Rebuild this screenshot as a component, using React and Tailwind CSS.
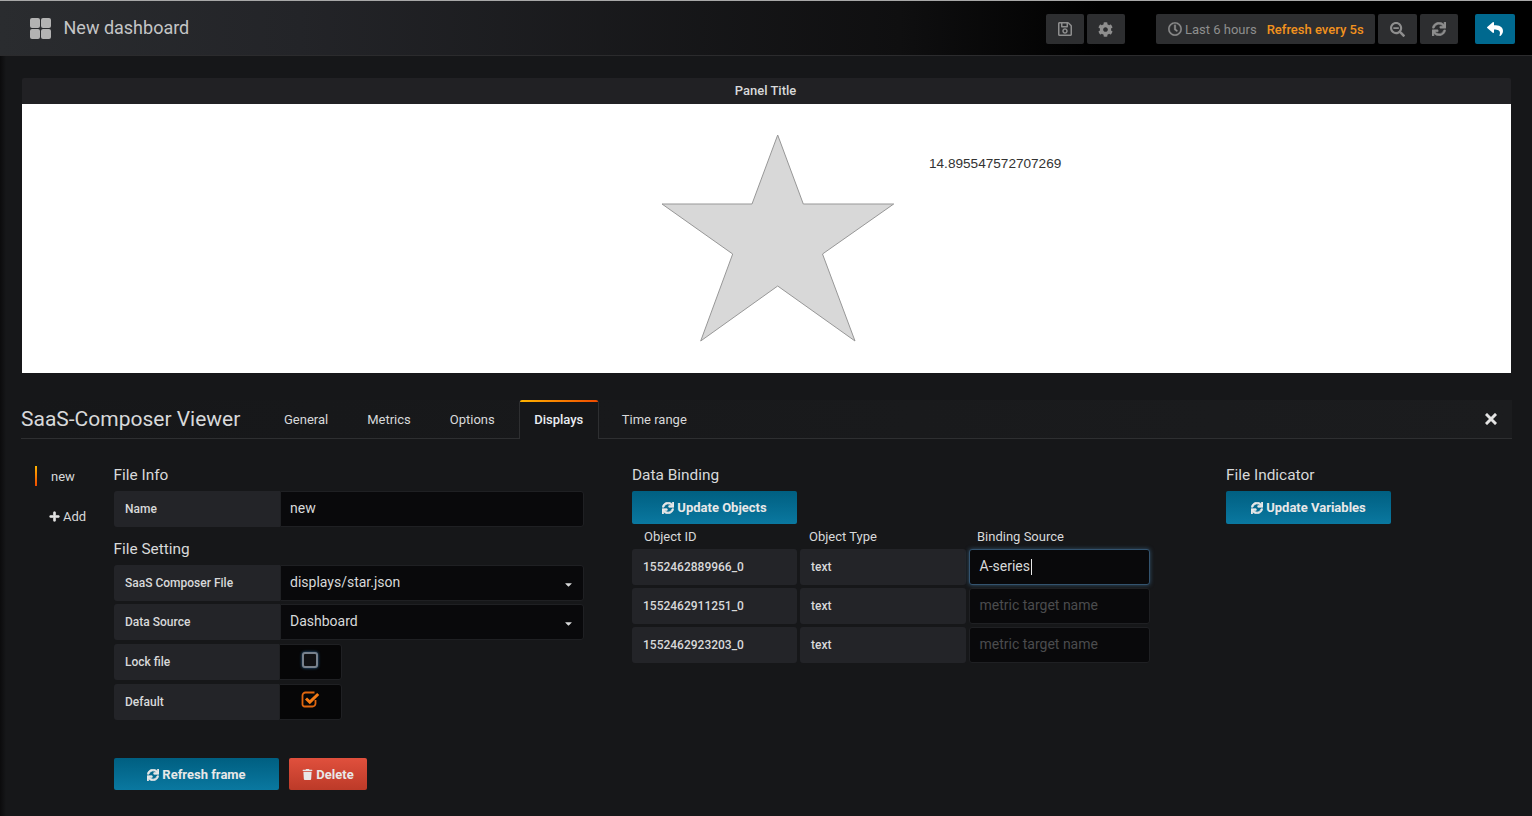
import { FaCaretDown, FaCog, FaPlus, FaRegClock, FaRegSave, FaReply, FaSearchMinus, FaSync, FaTrash } from "react-icons/fa";

const tabs = ["General", "Metrics", "Options", "Displays", "Time range"];

const bindings = [
  { id: "1552462889966_0", value: "A-series", focused: true },
  { id: "1552462911251_0" },
  { id: "1552462923203_0" },
];

function NavButton({ children, className = "" }) {
  return (
    <div className={`flex h-[30px] items-center justify-center rounded-[2px] bg-[#2d2e30] text-[#8e8e8e] ${className}`}>
      {children}
    </div>
  );
}

function BlueButton({ children, className = "" }) {
  return (
    <div className={`flex w-[165px] items-center justify-center gap-[3px] rounded-[2px] bg-[linear-gradient(180deg,#005f81,#0a78a0)] text-[13px] font-bold text-[#e8e8e8] ${className}`}>
      <FaSync className="text-[12px]" stroke="currentColor" strokeWidth={30} />
      {children}
    </div>
  );
}

function Label({ children, className = "w-[166px]" }) {
  return (
    <div className={`flex h-full shrink-0 items-center rounded-l-[3px] bg-[#232428] pl-[11px] text-[12px] font-medium text-[#d8d9da] ${className}`}>
      {children}
    </div>
  );
}

function SelectRow({ label, value }) {
  return (
    <div className="flex h-[36px] w-[470px]">
      <Label>{label}</Label>
      <div className="flex flex-1 items-center justify-between rounded-r-[3px] border border-[#1f2023] bg-[#09090b] px-[9px] pb-[2px] text-[14px] text-[#d8d9da]">
        {value}
        {value !== "new" && <FaCaretDown className="mt-[4px] text-[11px] text-[#d8d9da]" />}
      </div>
    </div>
  );
}

function CheckRow({ label, checked }) {
  return (
    <div className="flex h-[36px] w-[228px]">
      <Label className="w-[165px]">{label}</Label>
      <div className="flex flex-1 items-center justify-center rounded-r-[3px] border border-[#1f2023] bg-[#060607] pb-[5px] pr-[1px]">
        {checked ? (
          <svg width="19" height="17" viewBox="0 0 19 17" fill="none">
            <path d="M14.5 9v3.5a3 3 0 0 1-3 3h-8a2 2 0 0 1-2-2v-9a3 3 0 0 1 3-3h9" stroke="#e0660f" strokeWidth="1.8" />
            <path d="M5 7.5l3.8 3.6L17.2 3" stroke="#f47b16" strokeWidth="3" />
          </svg>
        ) : (
          <div className="h-[16px] w-[16px] rounded-[3px] border-2 border-[#76808c] bg-[#101114] shadow-[0_0_3px_#2e6a9e]" />
        )}
      </div>
    </div>
  );
}

function BindingRow({ id, value, focused }) {
  return (
    <div className="flex h-[36px] gap-[3px]">
      <div className="flex w-[165px] items-center rounded-[3px] bg-[#232428] pl-[11px] text-[12px] font-medium text-[#d8d9da]">{id}</div>
      <div className="flex w-[166px] items-center rounded-[3px] bg-[#232428] pl-[11px] text-[12px] font-medium text-[#d8d9da]">text</div>
      <div className={`flex w-[181px] items-center rounded-[3px] border bg-[#09090b] pb-[1px] pl-[9.5px] text-[14px] ${focused ? "border-[#33536e] text-[#d8d9da] shadow-[0_0_4px_#33536e]" : "border-[#1f2023] text-[#4b4c4e]"}`}>
        {value || "metric target name"}
        {focused && <span className="ml-[1px] h-[16px] w-[1px] bg-[#e8e8e8]" />}
      </div>
    </div>
  );
}

export default function App() {
  return (
    <div className="h-[816px] w-[1532px] overflow-hidden bg-[#161719] bg-[linear-gradient(90deg,#0b0b0c,#161719_6px)] font-['Roboto',sans-serif] text-[#d8d9da]">
      <header className="flex h-[56px] items-center border-t border-b border-t-[#a8a8a8] border-b-[#2b2b2d] bg-[linear-gradient(90deg,#2a2c2f_0px,#232428_300px,#0f0f10_900px,#000_1100px)] pr-[17px] pt-[2px]">
        <svg className="mb-[2px] ml-[30px]" width="21" height="21" viewBox="0 0 21 21" fill="#b3b3b3">
          <rect x="0" y="0" width="10" height="10" rx="2" />
          <rect x="11" y="0" width="10" height="10" rx="2" />
          <rect x="0" y="11" width="10" height="10" rx="2" />
          <rect x="11" y="11" width="10" height="10" rx="2" />
        </svg>
        <h1 className="mb-[4px] ml-[12.5px] text-[18px] font-normal text-[#c4c5c6]">New dashboard</h1>
        <div className="ml-auto flex items-center">
          <NavButton className="w-[38px]"><FaRegSave className="text-[16px]" /></NavButton>
          <NavButton className="ml-[3px] w-[38px]"><FaCog className="mr-[1px] text-[15px]" /></NavButton>
          <NavButton className="ml-[31px] w-[219px] justify-start pl-[12px] text-[13px]">
            <FaRegClock className="text-[14px]" stroke="currentColor" strokeWidth={12} />
            <span className="ml-[3px] mt-[2px]">Last 6 hours</span>
            <span className="ml-[10px] mt-[2px] font-medium text-[#f2921e]">Refresh every 5s</span>
          </NavButton>
          <NavButton className="ml-[3px] w-[39px]"><FaSearchMinus className="text-[15px]" /></NavButton>
          <NavButton className="ml-[3px] w-[38px]"><FaSync className="text-[14px]" stroke="currentColor" strokeWidth={20} /></NavButton>
          <div className="ml-[17px] flex h-[30px] w-[40px] items-center justify-center rounded-[2px] bg-[#00698f] text-white">
            <FaReply className="text-[16px]" />
          </div>
        </div>
      </header>

      <main className="pl-[22px] pr-[21px]">
        <section className="mt-[22px]">
          <div className="flex h-[26px] items-center justify-center rounded-t-[2px] bg-[#212124] pr-[2px] text-[13px] font-medium text-[#d8d9da]">Panel Title</div>
          <div className="flex h-[269px] bg-white">
            <svg className="ml-[638px] mt-[30px] shrink-0" width="236" height="210" viewBox="638 134 236 210">
              <polygon
                points="755.7,135 781.3,204 871.7,204 800.5,254 833,341 755.7,286 678.7,341 710.7,254 640,204 730,204"
                fill="#d8d8d8"
                stroke="#979797"
              />
            </svg>
            <span className="ml-[33px] mt-[52px] font-['Liberation_Sans',sans-serif] text-[13.6px] leading-[16px] text-[#333]">14.895547572707269</span>
          </div>
        </section>

        <section className="-ml-[1px] -mr-[1px]">
          <div className="mt-[27px] flex h-[39px] items-end border-b border-[#2e2f31] bg-[linear-gradient(90deg,#161719,#1b1c1e)]">
            <h2 className="mb-[6px] w-[248px] text-[21px] font-normal leading-[26px] text-[#d8d9da]">SaaS-Composer Viewer</h2>
            <div className="flex h-[38px] items-stretch text-[13px]">
              {tabs.map((tab) =>
                tab === "Displays" ? (
                  <div key={tab} className="-mb-[1px] mr-[8px] flex h-[39px] w-[80px] flex-col rounded-t-[3px] border-x border-[#2e2f31] bg-[#161719] text-center">
                    <div className="h-[2px] rounded-t-[2px] bg-[linear-gradient(90deg,#ffb400,#f04b00)]" />
                    <span className="mt-[8px] font-medium text-[#e9edf2]">{tab}</span>
                  </div>
                ) : (
                  <div key={tab} className="mr-[9px] flex items-center px-[15px] pt-[2px] text-[#d8d9da]">{tab}</div>
                ),
              )}
            </div>
            <svg className="mb-[13px] ml-auto mr-[15px]" width="12" height="12" viewBox="0 0 12 12">
              <path d="M2 2l8 8M10 2l-8 8" stroke="#e3e3e3" strokeWidth="3" strokeLinecap="square" />
            </svg>
          </div>

          <div className="flex">
            <nav className="w-[93px] shrink-0 pl-[14px] pt-[27px] text-[13px]">
              <div className="flex h-[20px] items-center gap-[14px]">
                <span className="h-[20px] w-[2px] bg-[linear-gradient(180deg,#ffb400,#f04b00)]" />
                <span className="mt-[1px]">new</span>
              </div>
              <div className="ml-[14px] mt-[21px] flex items-center gap-[3px]">
                <FaPlus className="text-[11px] text-[#e3e3e3]" stroke="currentColor" strokeWidth={30} />
                Add
              </div>
            </nav>

            <div className="w-[518px] shrink-0 pt-[27px]">
              <h3 className="-ml-[0.5px] text-[15.4px] font-normal leading-[19px]">File Info</h3>
              <div className="mt-[6px]"><SelectRow label="Name" value="new" /></div>
              <h3 className="-ml-[0.5px] mt-[13px] text-[15.4px] font-normal leading-[19px]">File Setting</h3>
              <div className="mt-[6px] flex flex-col gap-[3px]">
                <SelectRow label="SaaS Composer File" value="displays/star.json" />
                <SelectRow label="Data Source" value="Dashboard" />
              </div>
              <div className="mt-[4px] flex flex-col gap-[4px]">
                <CheckRow label="Lock file" />
                <CheckRow label="Default" checked />
              </div>
              <div className="mt-[38px] flex gap-[10px]">
                <BlueButton className="h-[32px] pt-[1px]">Refresh frame</BlueButton>
                <div className="flex h-[32px] w-[78px] items-center justify-center gap-[3px] rounded-[2px] bg-[linear-gradient(180deg,#e0503d,#bc3a28)] pt-[1px] text-[13px] font-bold text-[#e8e8e8]">
                  <FaTrash className="text-[11px]" />
                  Delete
                </div>
              </div>
            </div>

            <div className="w-[594px] shrink-0 pt-[27px]">
              <h3 className="text-[15.4px] font-normal leading-[19px]">Data Binding</h3>
              <BlueButton className="mt-[6px] h-[33px]">Update Objects</BlueButton>
              <div className="mt-[3px] flex h-[20px] items-center text-[13px]">
                <span className="ml-[12px] w-[165px]">Object ID</span>
                <span className="w-[168px]">Object Type</span>
                <span>Binding Source</span>
              </div>
              <div className="mt-[2px] flex flex-col gap-[3px]">
                {bindings.map((row) => (
                  <BindingRow key={row.id} {...row} />
                ))}
              </div>
            </div>

            <div className="pt-[27px]">
              <h3 className="text-[15.4px] font-normal leading-[19px]">File Indicator</h3>
              <BlueButton className="mt-[6px] h-[33px]">Update Variables</BlueButton>
            </div>
          </div>
        </section>
      </main>
    </div>
  );
}
